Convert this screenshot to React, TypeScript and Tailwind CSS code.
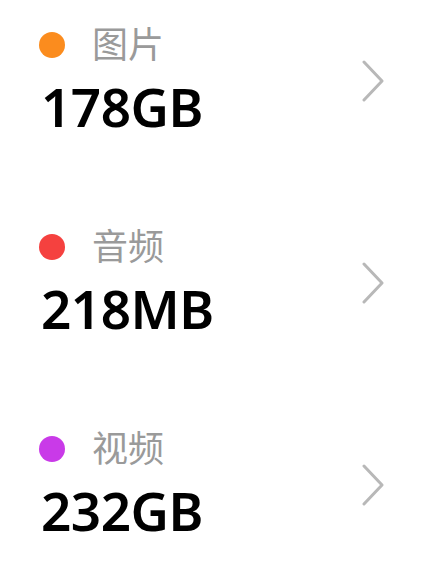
const ITEMS = [
  { label: '图片', size: '178GB', dot: 'bg-[#fb8c1e]' },
  { label: '音频', size: '218MB', dot: 'bg-[#f5413f]' },
  { label: '视频', size: '232GB', dot: 'bg-[#c93ae8]' },
]

function Chevron() {
  return (
    <svg width="24" height="42" viewBox="0 0 24 42" fill="none" className="text-[#b8b8b8]">
      <polyline points="3,2 21,21 3,40" stroke="currentColor" strokeWidth="3" strokeLinecap="round" strokeLinejoin="round" />
    </svg>
  )
}

export default function App() {
  return (
    <div
      className="w-[445px] h-[576px] bg-white overflow-hidden"
      style={{ fontFamily: '"Noto Sans", "Noto Sans CJK SC", sans-serif' }}
    >
      {ITEMS.map((it) => (
        <div key={it.label} className="flex items-start h-[202px] pl-[39px] pr-[60px]">
          <div className="flex-1 pt-[24px]">
            <div className="flex items-center h-[42px]">
              <span className={`w-[26px] h-[26px] rounded-full ${it.dot}`} />
              <span className="ml-[27px] text-[36px] leading-[42px] text-[#9a9a9a]">{it.label}</span>
            </div>
            <div className="mt-[11px] ml-[2px] text-[53px] leading-[60px] font-semibold text-black tracking-[-0.5px]">
              {it.size}
            </div>
          </div>
          <div className="mt-[60px]">
            <Chevron />
          </div>
        </div>
      ))}
    </div>
  )
}
